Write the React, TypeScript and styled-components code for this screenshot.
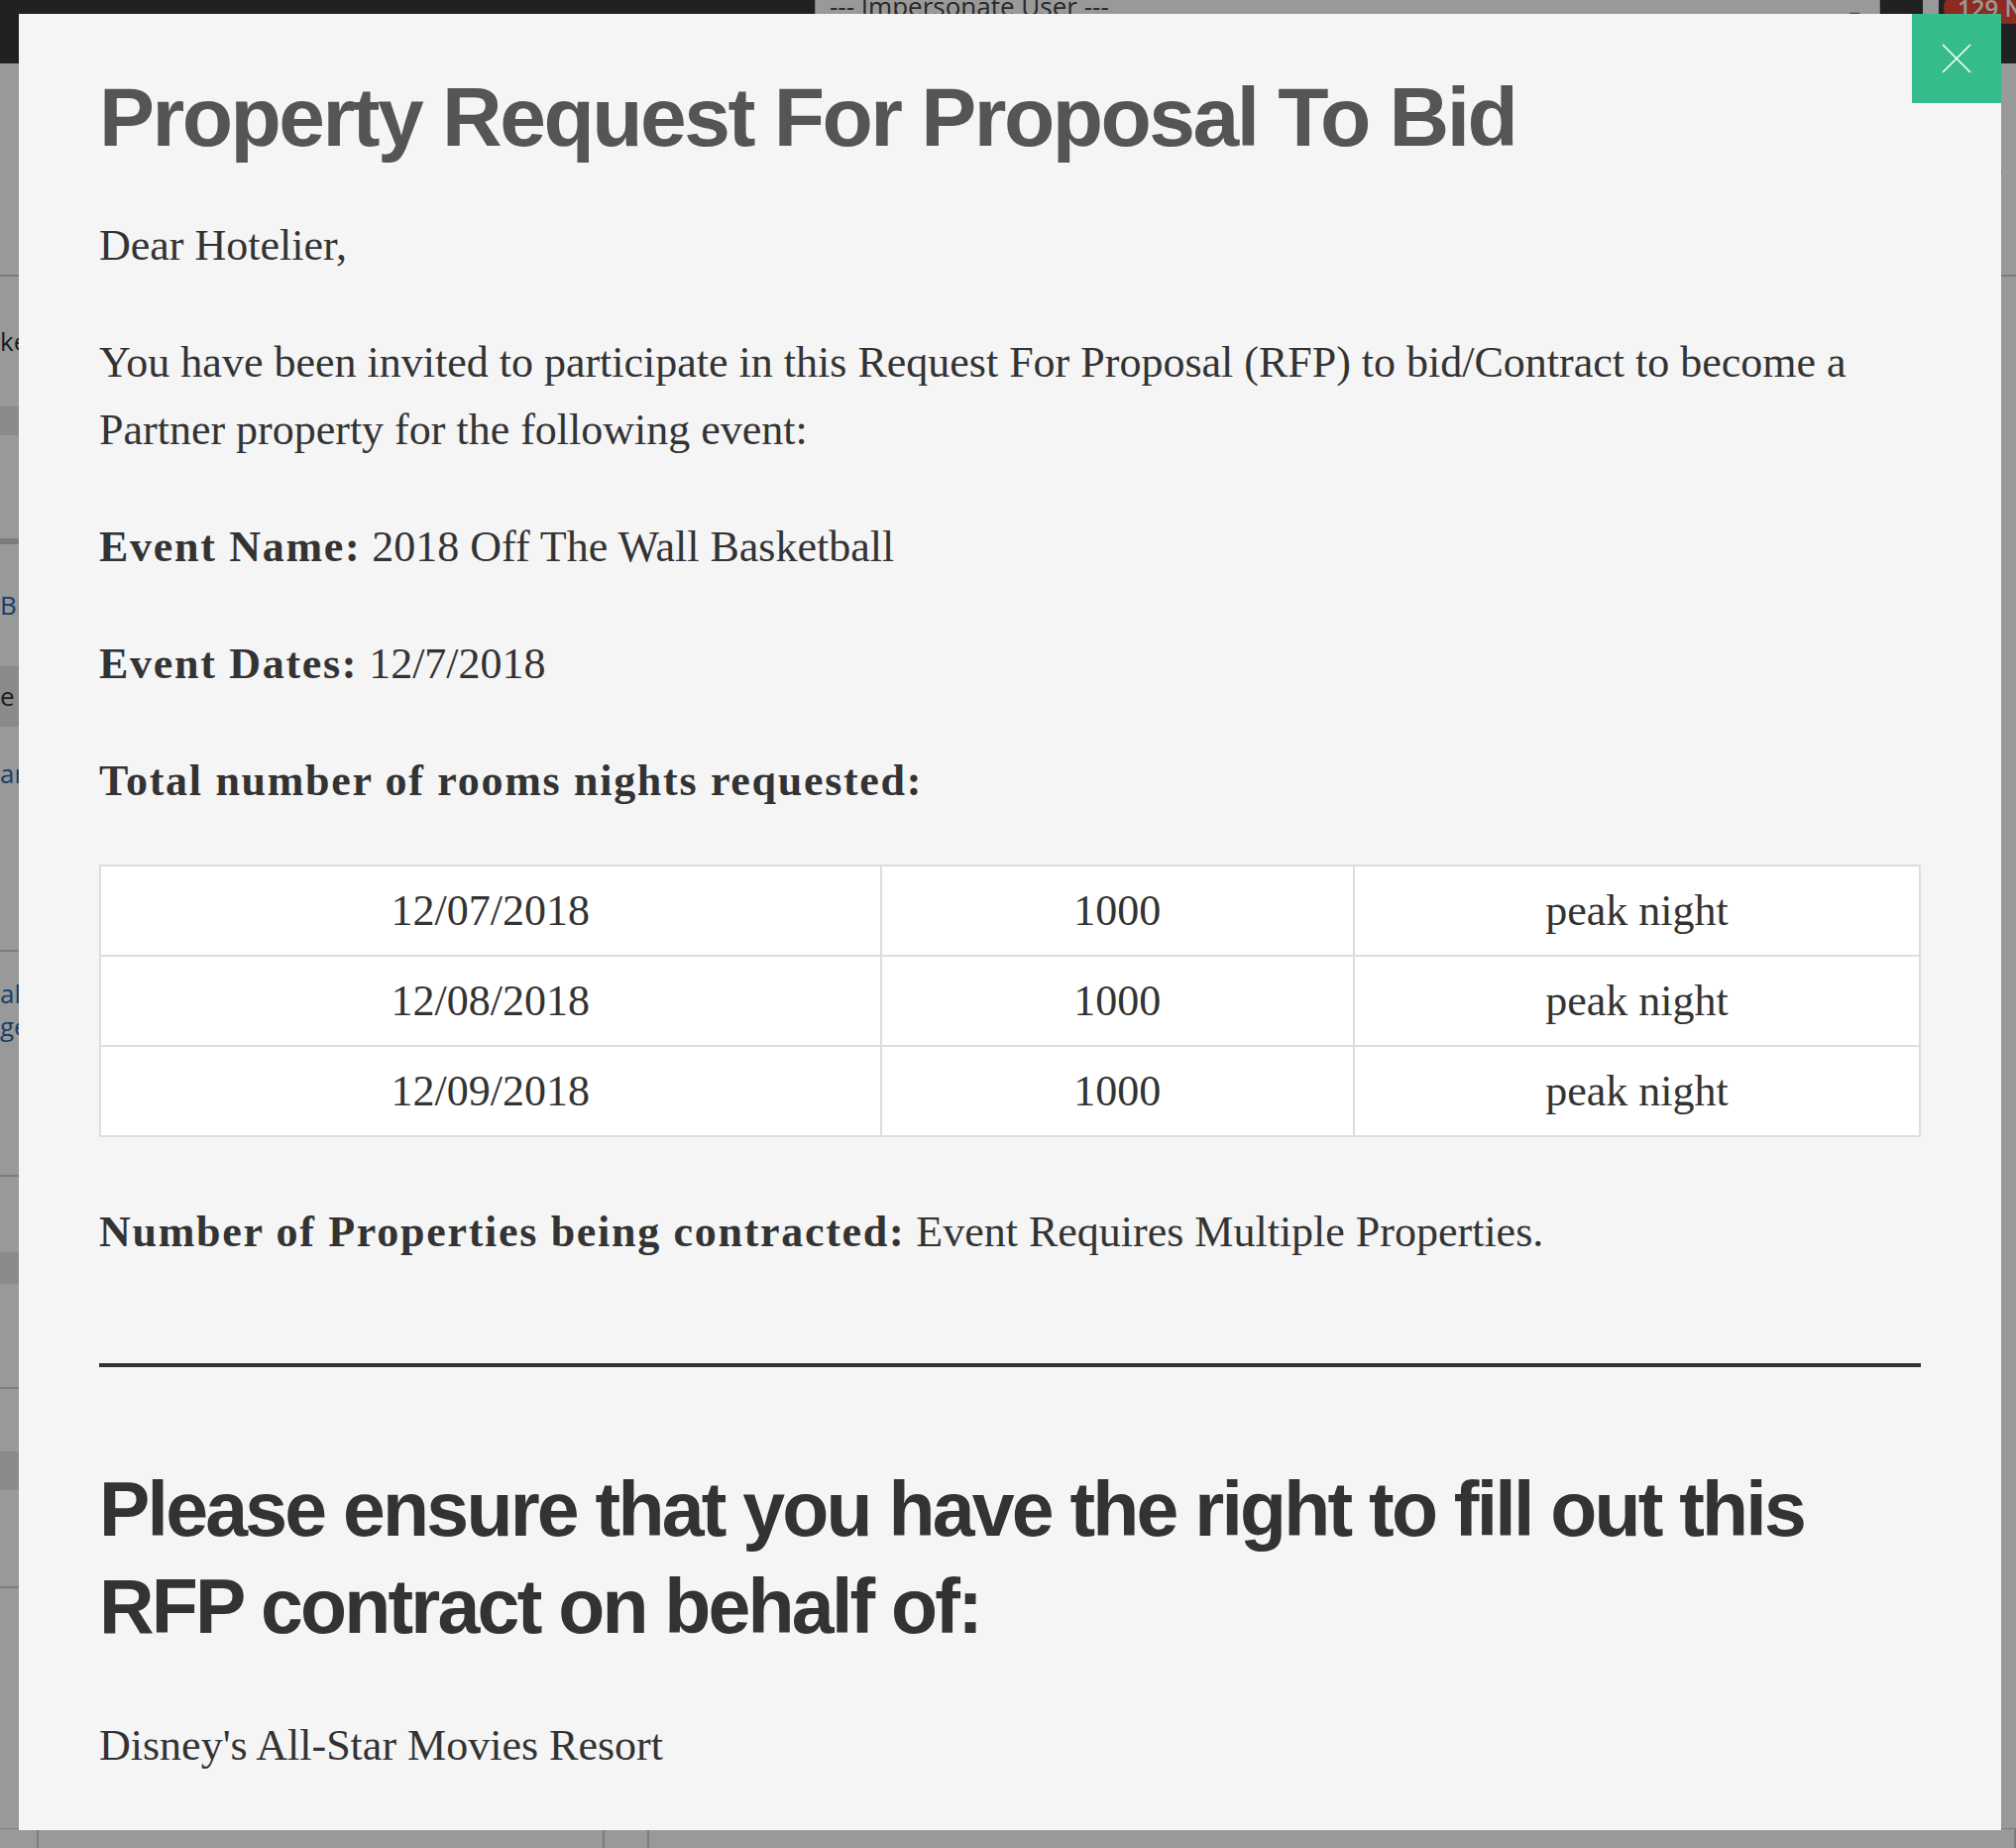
import React from "react";
import styled, { createGlobalStyle } from "styled-components";

const GlobalStyle = createGlobalStyle`
  html, body {
    margin: 0;
    padding: 0;
    width: 2034px;
    height: 1864px;
    overflow: hidden;
    background: #ffffff;
  }
  * { box-sizing: border-box; }
`;

/* ---------- underlying page (seen behind the backdrop) ---------- */

const Page = styled.div`
  position: relative;
  width: 2034px;
  height: 1864px;
  overflow: hidden;
  background: #ffffff;
  display: flex;
  flex-direction: column;
  font-family: "Open Sans", "Liberation Sans", sans-serif;
`;

const TopBar = styled.header`
  flex: 0 0 64px;
  background: #383838;
  display: flex;
  align-items: flex-start;
  padding-left: 822px;
  overflow: hidden;
`;

const ImpersonateSelect = styled.div`
  flex: 0 0 1075px;
  height: 40px;
  background: #ffffff;
  border: 1px solid #ccc;
  display: flex;
  align-items: flex-start;
  justify-content: space-between;
  padding: 0 16px 0 14px;
  font-size: 26px;
  line-height: 26px;
  color: #444;
  margin-top: -8px;
`;

const Caret = styled.span`
  font-size: 18px;
  color: #777;
  margin-top: 10px;
`;

const Notice = styled.div`
  flex: 0 0 auto;
  margin-left: 43px;
  display: flex;
  align-items: flex-start;
  gap: 5px;
  margin-top: -8px;
`;

const Bell = styled.span`
  width: 16px;
  height: 28px;
  border-radius: 8px 8px 4px 4px;
  background: #ffffff;
`;

const Badge = styled.span`
  background: #ed4634;
  color: #fff;
  font-size: 24px;
  font-weight: 600;
  line-height: 32px;
  padding: 0 14px;
  border-radius: 16px;
  white-space: nowrap;
`;

const Body = styled.div`
  flex: 1;
  display: flex;
  justify-content: space-between;
`;

const SideColumn = styled.div`
  width: 40px;
  display: flex;
  flex-direction: column;
`;

const SideRow = styled.div<{ $h: number; $band?: boolean; $line?: number }>`
  flex: 0 0 ${(p) => p.$h}px;
  background: ${(p) => (p.$band ? "#e6e6e6" : "#ffffff")};
  border-bottom: ${(p) => p.$line ?? 0}px solid #cfcfcf;
  display: flex;
  align-items: center;
  font-size: 26px;
  line-height: 33px;
  color: #333;
  overflow: hidden;
  white-space: nowrap;
`;

const SideLink = styled.span`
  color: #2a6ab0;
`;

const BottomStrip = styled.div`
  flex: 0 0 20px;
  display: grid;
  grid-template-columns: 39px 571px 45px 1fr;
  border-top: 1px solid #cfcfcf;
`;

const StripCell = styled.div`
  border-right: 2px solid #cfcfcf;
  background: #ffffff;
`;

/* ---------- backdrop + modal ---------- */

const Backdrop = styled.div`
  position: absolute;
  inset: 0;
  background: rgba(0, 0, 0, 0.4);
`;

const Modal = styled.section`
  position: absolute;
  left: 19px;
  top: 14px;
  width: 2000px;
  height: 1832px;
  background: #f5f5f5;
  padding: 58px 81px 0 81px;
  overflow: hidden;
`;

const CloseButton = styled.button`
  position: absolute;
  top: 0;
  right: 0;
  width: 90px;
  height: 90px;
  border: 0;
  padding: 0;
  background: #36bc8a;
  display: flex;
  align-items: center;
  justify-content: center;
  cursor: pointer;
`;

const Title = styled.h1`
  margin: 0 0 50px;
  font-family: "Liberation Sans", Arial, sans-serif;
  font-weight: 700;
  font-size: 84px;
  line-height: 92px;
  letter-spacing: -0.03em;
  color: #555555;
`;

const Para = styled.p`
  margin: 0 0 50px;
  font-family: "Liberation Serif", "Times New Roman", serif;
  font-size: 44px;
  line-height: 68px;
  color: #333333;
`;

const Label = styled.strong`
  font-weight: 700;
  letter-spacing: 1.7px;
`;

const NightsTable = styled.table`
  width: 100%;
  border-collapse: collapse;
  background: #ffffff;
  border: 2px solid #dddddd;
  margin: 0 0 62px;
  font-family: "Liberation Serif", "Times New Roman", serif;
  font-size: 44px;
  line-height: 68px;
  color: #333333;
`;

const Cell = styled.td<{ $w: string }>`
  width: ${(p) => p.$w};
  border: 2px solid #dddddd;
  padding: 11px 8px 10px;
  text-align: center;
`;

const Divider = styled.hr`
  border: 0;
  border-top: 4px solid #333333;
  margin: 98px 0 94px;
`;

const Subtitle = styled.h2`
  margin: 0 0 58px;
  font-family: "Liberation Sans", Arial, sans-serif;
  font-weight: 700;
  font-size: 77px;
  line-height: 98px;
  letter-spacing: -0.036em;
  color: #333333;
`;

const nights = [
  { date: "12/07/2018", rooms: "1000", kind: "peak night" },
  { date: "12/08/2018", rooms: "1000", kind: "peak night" },
  { date: "12/09/2018", rooms: "1000", kind: "peak night" },
];

const CloseIcon = () => (
  <svg width="30" height="30" viewBox="0 0 30 30" aria-hidden="true">
    <path d="M1 1 L29 29 M29 1 L1 29" stroke="#ffffff" strokeWidth="1.6" fill="none" />
  </svg>
);

export default function App() {
  return (
    <>
      <GlobalStyle />
      <Page>
        <TopBar>
          <ImpersonateSelect>
            <span>--- Impersonate User ---</span>
            <Caret>▼</Caret>
          </ImpersonateSelect>
          <Notice>
            <Bell />
            <Badge>129 New</Badge>
          </Notice>
        </TopBar>
        <Body>
          <SideColumn>
            <SideRow $h={215} $line={2} />
            <SideRow $h={131}>ke</SideRow>
            <SideRow $h={29} $band />
            <SideRow $h={110} $line={6} />
            <SideRow $h={123}>
              <SideLink>Bi</SideLink>
            </SideRow>
            <SideRow $h={61} $band>e :</SideRow>
            <SideRow $h={94}>
              <SideLink>ar</SideLink>
            </SideRow>
            <SideRow $h={133} $line={2} />
            <SideRow $h={118}>
              <SideLink>
                al
                <br />
                ge
              </SideLink>
            </SideRow>
            <SideRow $h={109} $line={2} />
            <SideRow $h={76} />
            <SideRow $h={32} $band />
            <SideRow $h={106} $line={2} />
            <SideRow $h={63} />
            <SideRow $h={39} $band />
            <SideRow $h={99} $line={2} />
          </SideColumn>
          <SideColumn>
            <SideRow $h={215} $line={2}>
              <SideLink>ro</SideLink>
            </SideRow>
          </SideColumn>
        </Body>
        <BottomStrip>
          <StripCell />
          <StripCell />
          <StripCell />
          <StripCell />
        </BottomStrip>

        <Backdrop />

        <Modal>
          <CloseButton aria-label="Close">
            <CloseIcon />
          </CloseButton>

          <Title>Property Request For Proposal To Bid</Title>

          <Para>Dear Hotelier,</Para>
          <Para>
            You have been invited to participate in this Request For Proposal (RFP) to
            bid/Contract to become a Partner property for the following event:
          </Para>
          <Para>
            <Label>Event Name:</Label> 2018 Off The Wall Basketball
          </Para>
          <Para>
            <Label>Event Dates:</Label> 12/7/2018
          </Para>
          <Para>
            <Label>Total number of rooms nights requested:</Label>
          </Para>

          <NightsTable>
            <tbody>
              {nights.map((n) => (
                <tr key={n.date}>
                  <Cell $w="42.9%">{n.date}</Cell>
                  <Cell $w="26%">{n.rooms}</Cell>
                  <Cell $w="31.1%">{n.kind}</Cell>
                </tr>
              ))}
            </tbody>
          </NightsTable>

          <Para>
            <Label>Number of Properties being contracted:</Label> Event Requires Multiple
            Properties.
          </Para>

          <Divider />

          <Subtitle>
            Please ensure that you have the right to fill out this RFP contract on behalf of:
          </Subtitle>

          <Para>Disney's All-Star Movies Resort</Para>
        </Modal>
      </Page>
    </>
  );
}
